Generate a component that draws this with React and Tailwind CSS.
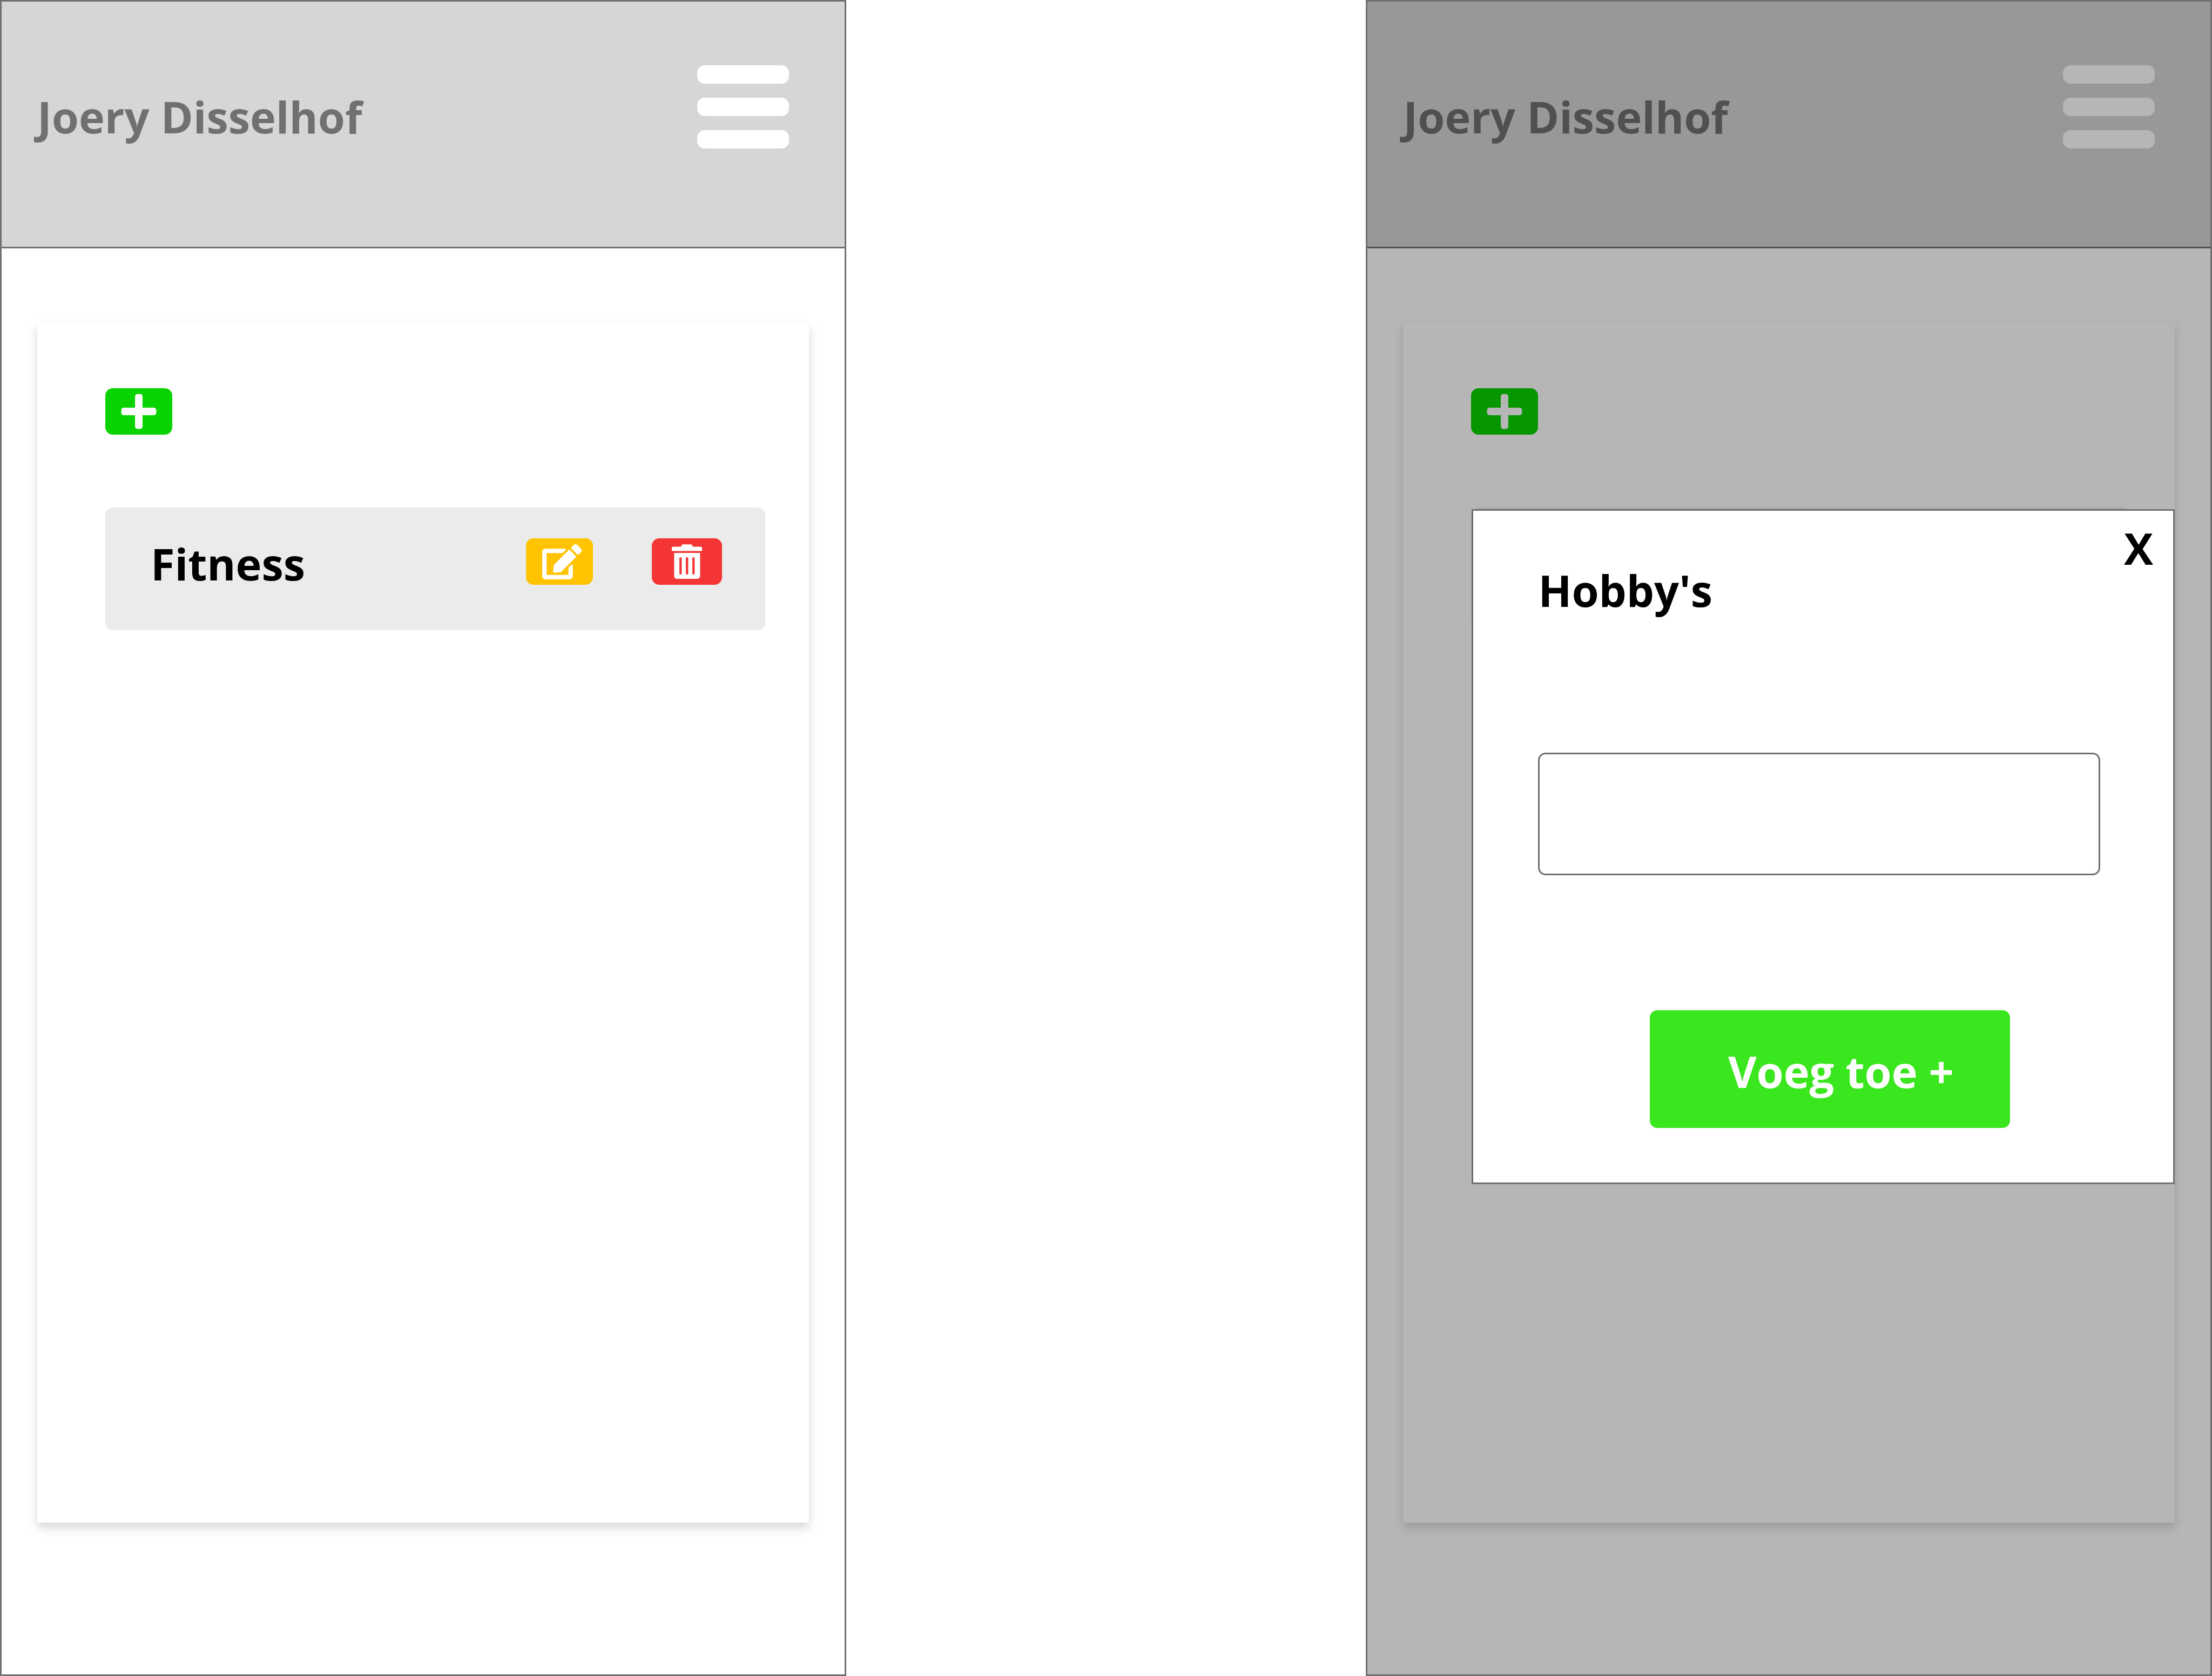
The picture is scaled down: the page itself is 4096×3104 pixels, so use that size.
import { FaPlus, FaEdit } from "react-icons/fa";

function TrashIcon() {
  return (
    <svg viewBox="0 0 78 90" className="h-[65px] w-[56px]" fill="currentColor" aria-hidden="true">
      <path d="M4 6H24L25.500 2Q26.500 0 29 0H49Q51.500 0 52.500 2L54 6H74Q78 6 78 9.500V15Q78 17 76 17H2Q0 17 0 15V9.500Q0 6 4 6Z" />
      <path
        fillRule="evenodd"
        d="M7.500 22H71Q73 22 73 24V80Q73 89 64 89H15Q6 89 6 80V24Q6 22 7.500 22ZM19.500 36V75a3 3 0 0 0 6 0V36a3 3 0 0 0-6 0ZM36.250 36V75a3 3 0 0 0 6 0V36a3 3 0 0 0-6 0ZM53 36V75a3 3 0 0 0 6 0V36a3 3 0 0 0-6 0Z"
      />
    </svg>
  );
}

function HobbyActions({ name }) {
  return (
    <>
      <span className="mt-[48px] flex-1 text-[81px] leading-[112px] font-bold text-black">{name}</span>
      <button type="button" aria-label="Bewerken" className="mt-[57px] flex h-[86px] w-[124px] items-center justify-center rounded-[14px] bg-[#ffc300] pl-[9px] text-white">
        <FaEdit className="h-[65px] w-[73px]" />
      </button>
      <button type="button" aria-label="Verwijderen" className="mt-[57px] ml-[109px] flex h-[86px] w-[130px] items-center justify-center rounded-[14px] bg-[#f43535] text-white">
        <TrashIcon />
      </button>
    </>
  );
}

function Phone({ hobby, children }) {
  return (
    <section className="relative flex min-h-screen flex-col border-[3px] border-[#707070] bg-white">
      <header className="flex h-[457px] shrink-0 items-start justify-between border-b-[3px] border-[#707070] bg-[#d6d6d6] pr-[103px] pl-[66px]">
        <h1 className="mt-[157px] text-[81px] leading-[112px] font-bold text-[#707070]">Joery Disselhof</h1>
        <button type="button" aria-label="Menu" className="mt-[118px] flex w-[170px] flex-col gap-[26px]">
          <span className="h-[34px] rounded-[14px] bg-white" />
          <span className="h-[34px] rounded-[14px] bg-white" />
          <span className="h-[34px] rounded-[14px] bg-white" />
        </button>
      </header>
      <main className="mx-[66px] mt-[138px] mb-[281px] flex flex-1 flex-col items-start bg-white pt-[121px] pr-[81px] pl-[126px] shadow-[0_9px_17px_rgba(0,0,0,0.16)]">
        <button type="button" aria-label="Toevoegen" className="flex h-[86px] w-[124px] items-center justify-center rounded-[14px] bg-[#09d300] text-white">
          <FaPlus className="size-[74px]" />
        </button>
        <ul className="mt-[135px] w-full">
          <li className="flex h-[227px] items-start rounded-[14px] bg-[#ebebeb] pr-[80px] pl-[84px]">
            {hobby && <HobbyActions name={hobby} />}
          </li>
        </ul>
      </main>
      {children}
    </section>
  );
}

function HobbyDialog() {
  return (
    <div className="absolute inset-0 bg-black/[0.286] pt-[940px] pr-[66px] pl-[193px]">
      <form role="dialog" aria-labelledby="hobby-title" className="flex h-[1250px] flex-col border-[3px] border-[#707070] bg-white">
        <button type="button" aria-label="Sluiten" className="mt-[13px] mr-[37px] self-end text-[81px] leading-[112px] font-bold text-black">X</button>
        <label id="hobby-title" htmlFor="hobby" className="-mt-[34px] ml-[120px] self-start text-[81px] leading-[112px] font-bold text-black">Hobby&apos;s</label>
        <input id="hobby" type="text" className="mt-[245px] mr-[135px] ml-[120px] h-[227px] rounded-[14px] border-[3px] border-[#707070] bg-white px-[40px] text-[81px]" />
        <button type="button" className="mt-[250px] ml-[327px] h-[218px] w-[667px] rounded-[14px] bg-[#3ae61e] pt-[8px] pl-[40px] text-[81px] leading-[112px] font-bold text-white">Voeg toe +</button>
      </form>
    </div>
  );
}

export default function App() {
  return (
    <div className="grid min-h-screen grid-cols-[109fr_67fr_109fr] bg-white font-['Open_Sans','Noto_Sans',sans-serif]">
      <Phone hobby="Fitness" />
      <div />
      <Phone>
        <HobbyDialog />
      </Phone>
    </div>
  );
}
